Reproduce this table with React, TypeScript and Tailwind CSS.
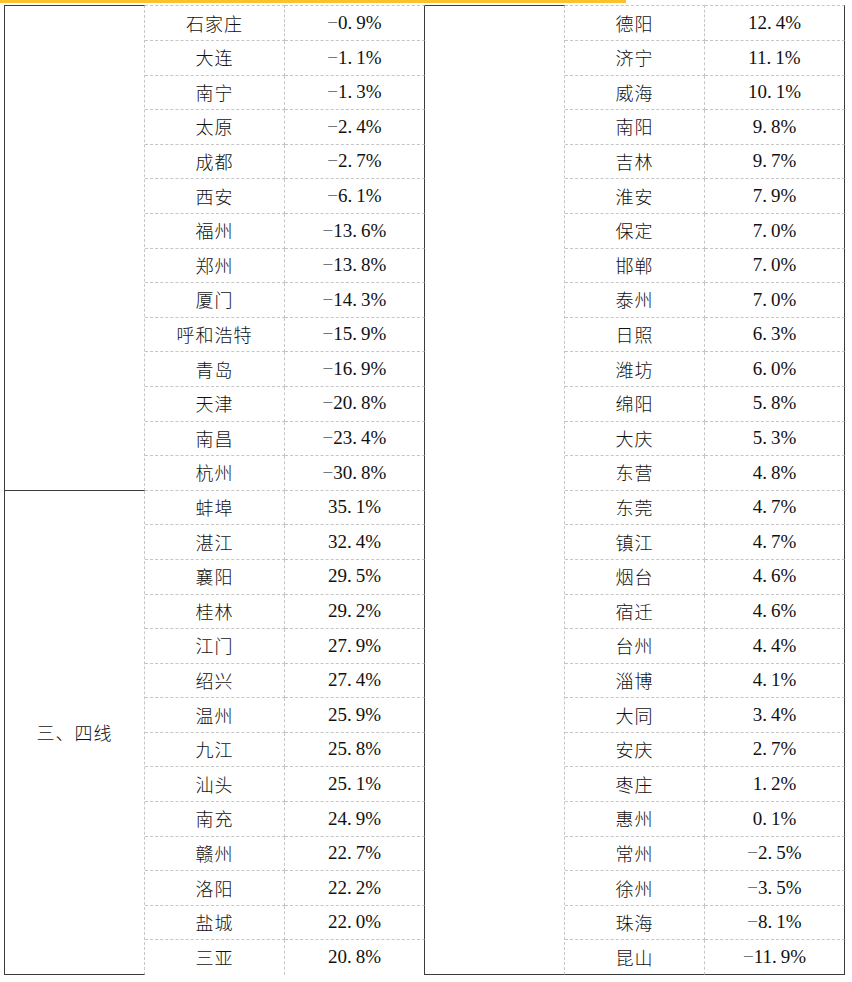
import React from 'react';

const leftRows: [string, string][] = [
    ['石家庄', '-0.9'], ['大连', '-1.1'], ['南宁', '-1.3'], ['太原', '-2.4'], ['成都', '-2.7'],
    ['西安', '-6.1'], ['福州', '-13.6'], ['郑州', '-13.8'], ['厦门', '-14.3'], ['呼和浩特', '-15.9'],
    ['青岛', '-16.9'], ['天津', '-20.8'], ['南昌', '-23.4'], ['杭州', '-30.8'],
    ['蚌埠', '35.1'], ['湛江', '32.4'], ['襄阳', '29.5'], ['桂林', '29.2'], ['江门', '27.9'],
    ['绍兴', '27.4'], ['温州', '25.9'], ['九江', '25.8'], ['汕头', '25.1'], ['南充', '24.9'],
    ['赣州', '22.7'], ['洛阳', '22.2'], ['盐城', '22.0'], ['三亚', '20.8'],
];

const rightRows: [string, string][] = [
    ['德阳', '12.4'], ['济宁', '11.1'], ['威海', '10.1'], ['南阳', '9.8'], ['吉林', '9.7'],
    ['淮安', '7.9'], ['保定', '7.0'], ['邯郸', '7.0'], ['泰州', '7.0'], ['日照', '6.3'],
    ['潍坊', '6.0'], ['绵阳', '5.8'], ['大庆', '5.3'], ['东营', '4.8'], ['东莞', '4.7'],
    ['镇江', '4.7'], ['烟台', '4.6'], ['宿迁', '4.6'], ['台州', '4.4'], ['淄博', '4.1'],
    ['大同', '3.4'], ['安庆', '2.7'], ['枣庄', '1.2'], ['惠州', '0.1'], ['常州', '-2.5'],
    ['徐州', '-3.5'], ['珠海', '-8.1'], ['昆山', '-11.9'],
];

const cjk = "font-['Noto_Sans_CJK_SC',sans-serif] font-light text-[18px] tracking-[1px] text-[#111]";
const num = "font-['Liberation_Serif','Times_New_Roman',serif] text-[19px] text-[#111]";

const Value: React.FC<{ v: string }> = ({ v }) => {
    const neg = v.startsWith('-');
    const [whole, dec] = v.replace('-', '').split('.');
    return (
        <span className={num}>
            {neg && <span className="text-[#777]">−</span>}
            {whole}
            <span className="mr-[4px]">.</span>
            {dec}%
        </span>
    );
};

const cellBase = 'flex items-center justify-center border-[#c6c6c6]';

const App: React.FC = () => {
    return (
        <div className="w-[852px] h-[982px] bg-white overflow-hidden">
            <div className="h-[3px] w-[626px] bg-[#fcc12c]" />
            <div className="mt-[2px] ml-[4px] grid grid-cols-[141px_repeat(5,140px)] grid-rows-[36px_repeat(27,34.6px)]">
                {/* category cells */}
                <div className={`${cellBase} col-start-1 row-start-1 row-span-14 border-l border-t border-b border-r border-l-[#3c3c3c] border-t-[#3c3c3c] border-b-[#3c3c3c] [border-right-style:dashed]`} />
                <div className={`${cellBase} col-start-1 row-start-15 row-span-14 border-l border-b border-r border-l-[#3c3c3c] border-b-[#3c3c3c] [border-right-style:dashed]`}>
                    <span className={cjk}>三、四线</span>
                </div>
                <div className={`${cellBase} col-start-4 row-start-1 row-span-28 border-t border-b border-r border-t-[#3c3c3c] border-b-[#3c3c3c] [border-right-style:dashed]`} />

                {leftRows.map(([city, val], i) => {
                    const first = i === 0;
                    const last = i === leftRows.length - 1;
                    const [rCity, rVal] = rightRows[i];
                    return (
                        <React.Fragment key={city + i}>
                            <div className={`${cellBase} border-r [border-right-style:dashed] ${first ? 'border-t [border-top-style:dashed]' : ''} ${last ? '' : 'border-b [border-bottom-style:dashed]'}`}>
                                <span className={cjk}>{city}</span>
                            </div>
                            <div className={`${cellBase} border-r border-r-[#3c3c3c] ${first ? 'border-t [border-top-style:dashed]' : ''} ${last ? '' : 'border-b [border-bottom-style:dashed]'}`}>
                                <Value v={val} />
                            </div>
                            <div className={`${cellBase} border-r [border-right-style:dashed] border-b ${first ? 'border-t [border-top-style:dashed]' : ''} ${last ? 'border-b-[#3c3c3c]' : '[border-bottom-style:dashed]'}`}>
                                <span className={cjk}>{rCity}</span>
                            </div>
                            <div className={`${cellBase} border-r border-r-[#3c3c3c] border-b ${first ? 'border-t [border-top-style:dashed]' : ''} ${last ? 'border-b-[#3c3c3c]' : '[border-bottom-style:dashed]'}`}>
                                <Value v={rVal} />
                            </div>
                        </React.Fragment>
                    );
                })}
            </div>
        </div>
    );
};

export default App;
